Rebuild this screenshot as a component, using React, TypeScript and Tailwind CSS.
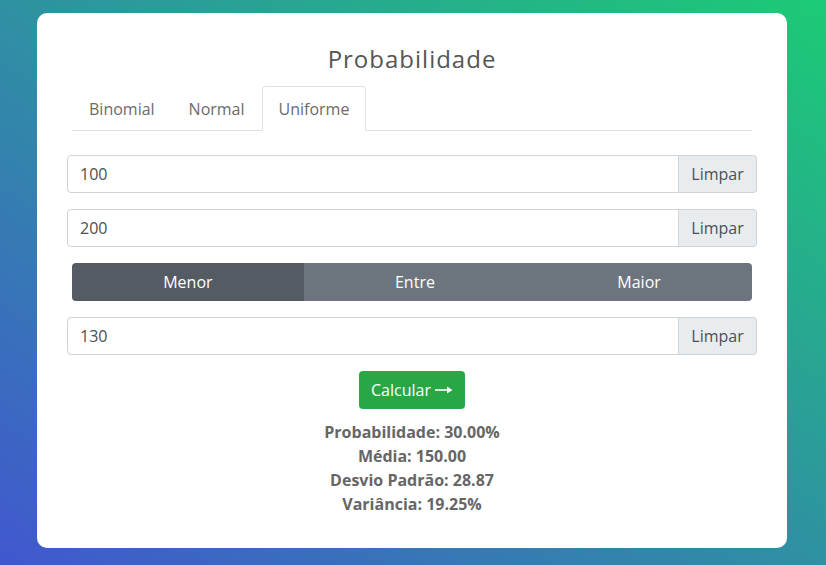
import { useState } from "react";

type Mode = "Menor" | "Entre" | "Maior";

const tabs = ["Binomial", "Normal", "Uniforme"];
const modes: Mode[] = ["Menor", "Entre", "Maior"];

const ClearableInput = ({ value }: { value: string }) => (
  <div className="flex h-[38px] w-full">
    <input
      defaultValue={value}
      className="flex-1 min-w-0 rounded-l-[4px] border border-[#ced4da] bg-white px-3 text-[16px] text-[#495057] outline-none"
    />
    <button className="w-[78px] rounded-r-[4px] border border-l-0 border-[#ced4da] bg-[#e9ecef] text-[16px] text-[#495057]">
      Limpar
    </button>
  </div>
);

export default function App() {
  const [tab, setTab] = useState("Uniforme");
  const [mode, setMode] = useState<Mode>("Menor");

  return (
    <div
      className="min-h-[565px] w-full bg-[linear-gradient(to_top_right,#4157cf,#1ccb75)] pl-[37px] pr-[39px] pt-[13px] pb-[17px]"
      style={{ fontFamily: '"Open Sans", sans-serif' }}
    >
      <div className="flex flex-col rounded-[10px] bg-white px-[30px] pt-[31px] pb-[32px]">
        <h1 className="text-center text-[24px] leading-[30px] font-normal tracking-[1px] text-[#555]">
          Probabilidade
        </h1>

        <div className="mx-[5px] mt-[12px] flex border-b border-[#dee2e6]">
          {tabs.map((t) => (
            <button
              key={t}
              onClick={() => setTab(t)}
              className={`-mb-px h-[45px] rounded-t-[4px] border px-4 text-[16px] ${
                t === tab
                  ? "border-[#dee2e6] border-b-white bg-white text-[#6b6b6b]"
                  : "border-transparent text-[#6b6b6b]"
              }`}
            >
              {t}
            </button>
          ))}
        </div>

        <div className="mt-6 flex flex-col gap-4">
          <ClearableInput value="100" />
          <ClearableInput value="200" />
          <div className="mx-[5px] flex h-[38px] overflow-hidden rounded-[4px]">
            {modes.map((m) => (
              <button
                key={m}
                onClick={() => setMode(m)}
                className={`flex-auto px-3 text-[16px] text-white ${
                  m === mode ? "bg-[#545b62]" : "bg-[#6c757d]"
                }`}
              >
                {m}
              </button>
            ))}
          </div>
          <ClearableInput value="130" />
          <div className="flex justify-center">
            <button className="flex h-[38px] w-[106px] items-center justify-center gap-[4px] rounded-[4px] bg-[#28a745] text-[16px] text-white">
              Calcular
              <svg width="18" height="10" viewBox="0 0 18 10" fill="white">
                <rect x="0" y="4.2" width="13" height="1.6" />
                <path d="M12 1.5 L17.5 5 L12 8.5 Z" />
              </svg>
            </button>
          </div>
        </div>

        <div className="mt-[11px] text-center text-[16px] leading-[24px] font-bold text-[#666]">
          <p>Probabilidade: 30.00%</p>
          <p>Média: 150.00</p>
          <p>Desvio Padrão: 28.87</p>
          <p>Variância: 19.25%</p>
        </div>
      </div>
    </div>
  );
}
